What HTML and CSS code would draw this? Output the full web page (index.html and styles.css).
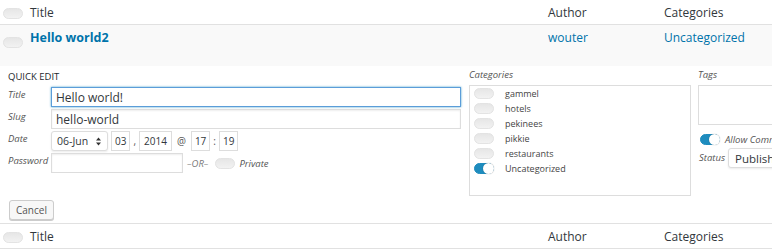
FILE: index.html
```
<!DOCTYPE html>
<html lang="en">
<head>
  <meta charset="UTF-8" />
  <title>Posts - Quick Edit</title>
  <link rel="stylesheet" href="styles.css">
</head>
<body>
  <table class="posts">
    <thead>
      <tr>
        <th class="check"><span class="toggle"></span></th>
        <th class="col-title">Title</th>
        <th class="col-author">Author</th>
        <th class="col-cats">Categories</th>
      </tr>
    </thead>
    <tbody>
      <tr class="post-row">
        <td class="check"><span class="toggle"></span></td>
        <td class="col-title"><a class="row-title">Hello world2</a></td>
        <td class="col-author"><a>wouter</a></td>
        <td class="col-cats"><a>Uncategorized</a></td>
      </tr>
      <tr class="edit-row">
        <td colspan="4">
          <div class="quick-edit">
            <!-- left column -->
            <fieldset class="qe-left">
              <h4>Quick Edit</h4>
              <label class="field">
                <span class="lbl">Title</span>
                <input type="text" class="wide focused" value="Hello world!" />
              </label>
              <label class="field">
                <span class="lbl">Slug</span>
                <input type="text" class="wide" value="hello-world" />
              </label>
              <div class="field">
                <span class="lbl">Date</span>
                <div class="date">
                  <span class="select month">06-Jun
                    <svg width="5" height="9" viewBox="0 0 5 9"><path d="M2.5 0.5 L5 3.5 H0 Z M2.5 8.5 L5 5.5 H0 Z" fill="#333"/></svg>
                  </span>
                  <span class="num">03</span><span class="sep">,</span>
                  <span class="num year">2014</span><span class="sep at">@</span>
                  <span class="num">17</span><span class="sep">:</span>
                  <span class="num">19</span>
                </div>
              </div>
              <div class="field">
                <span class="lbl">Password</span>
                <input type="text" class="pass" />
                <em class="or">&ndash;OR&ndash;</em>
                <span class="toggle"></span>
                <em class="private">Private</em>
              </div>
              <button class="cancel" type="button">Cancel</button>
            </fieldset>

            <!-- categories -->
            <fieldset class="qe-mid">
              <span class="title">Categories</span>
              <ul class="cat-list">
                <li><span class="toggle"></span>gammel</li>
                <li><span class="toggle"></span>hotels</li>
                <li><span class="toggle"></span>pekinees</li>
                <li><span class="toggle"></span>pikkie</li>
                <li><span class="toggle"></span>restaurants</li>
                <li><span class="toggle on"></span>Uncategorized</li>
              </ul>
            </fieldset>

            <!-- tags / status -->
            <fieldset class="qe-right">
              <span class="title">Tags</span>
              <div class="tags-box"></div>
              <div class="comments"><span class="toggle on"></span><em>Allow Comments</em></div>
              <div class="status">
                <span class="title">Status</span>
                <span class="select status-sel">Published</span>
              </div>
            </fieldset>
          </div>
        </td>
      </tr>
    </tbody>
    <tfoot>
      <tr>
        <th class="check"><span class="toggle"></span></th>
        <th class="col-title">Title</th>
        <th class="col-author">Author</th>
        <th class="col-cats">Categories</th>
      </tr>
    </tfoot>
  </table>
</body>
</html>
```
FILE: styles.css
```
body {
  margin: 0;
  width: 772px;
  overflow: hidden;
  background: #fff;
  font-family: 'Open Sans', sans-serif;
  color: #444;
}
.posts {
  width: 820px;
  border-collapse: collapse;
  table-layout: fixed;
}
.posts th {
  font-weight: 400;
  text-align: left;
  font-size: 12px;
  color: #32373c;
  height: 24px;
  padding: 0;
}
thead tr {
  border-bottom: 1px solid #e1e1e1;
}
tfoot tr {
  border-top: 1px solid #e1e1e1;
  border-bottom: 1px solid #e1e1e1;
}
.check {
  width: 27px;
  padding: 0 0 0 3px !important;
}
.col-title { width: 518px; }
.col-author { width: 116px; }
.col-cats { width: auto; }
.post-row {
  background: #f9f9f9;
}
.post-row td {
  height: 37px;
  vertical-align: top;
  padding: 4px 0 0;
  font-size: 12px;
  line-height: 18px;
}
.post-row .check {
  padding-top: 8px !important;
  height: 33px;
}
.post-row a {
  color: #0073aa;
}
.row-title {
  font-weight: 700;
  font-size: 12.5px;
}

/* toggles */
.toggle {
  display: inline-block;
  vertical-align: middle;
  width: 18px;
  height: 9px;
  border-radius: 6px;
  background: linear-gradient(#e6e6e6, #f2f2f2);
  border: 1px solid #e3e3e3;
  position: relative;
}
.toggle.on {
  background: #1e8cbe;
  border-color: #1e8cbe;
}
.toggle.on::after {
  content: '';
  position: absolute;
  right: -1px;
  top: -1px;
  width: 11px;
  height: 11px;
  border-radius: 50%;
  background: #fff;
  box-shadow: 0 0 1px rgba(0,0,0,0.4);
}

/* quick edit */
.edit-row td {
  padding: 0;
}
.quick-edit {
  display: flex;
  height: 157px;
  font-size: 10px;
}
fieldset {
  border: 0;
  margin: 0;
  padding: 0;
}
.qe-left {
  width: 454px;
  padding: 5px 0 0 8px;
}
.qe-left h4 {
  margin: 0 0 4px;
  font-size: 9.5px;
  font-weight: 400;
  text-transform: uppercase;
  color: #23282d;
  line-height: 12px;
}
.field {
  display: flex;
  align-items: center;
  height: 20px;
  margin-bottom: 2px;
}
.lbl {
  width: 43px;
  flex: none;
  font-style: italic;
  font-size: 9.5px;
  color: #555;
  align-self: flex-start;
  padding-top: 1px;
}
input {
  font-family: 'Open Sans', sans-serif;
  box-sizing: border-box;
  height: 20px;
  border: 1px solid #ddd;
  box-shadow: inset 0 1px 2px rgba(0,0,0,0.07);
  padding: 0 4px;
  font-size: 12px;
  color: #32373c;
  margin: 0;
}
input.wide { width: 410px; }
input.focused {
  border-color: #5b9dd9;
  box-shadow: 0 0 2px rgba(30,140,190,0.8);
}
input.pass { width: 132px; }
.date {
  display: flex;
  align-items: center;
  font-size: 10px;
  color: #32373c;
}
.select {
  box-sizing: border-box;
  display: inline-flex;
  align-items: center;
  justify-content: space-between;
  height: 20px;
  border: 1px solid #ddd;
  border-radius: 3px;
  box-shadow: 0 1px 2px rgba(0,0,0,0.08);
  background: #fff;
  font-size: 12px;
  color: #32373c;
}
.month {
  width: 57px;
  padding: 0 6px 0 5px;
  font-size: 10.5px;
}
.num {
  box-sizing: border-box;
  height: 20px;
  line-height: 18px;
  border: 1px solid #ddd;
  padding: 0 3px;
  margin-left: 3px;
  font-size: 10px;
}
.year { padding: 0 4px; }
.sep {
  margin-left: 3px;
  color: #555;
}
.at { margin: 0 2px 0 5px; }
.or {
  margin: 0 7px 0 4px;
  color: #777;
  font-size: 9.5px;
}
.private {
  margin-left: 4px;
  color: #555;
  font-size: 9.5px;
}
.cancel {
  margin: 25px 0 0 1px;
  height: 20px;
  padding: 0 6px;
  font-family: 'Open Sans', sans-serif;
  font-size: 10px;
  color: #555;
  background: #f7f7f7;
  border: 1px solid #ccc;
  border-radius: 3px;
  box-shadow: 0 1px 0 #ccc;
}
.title {
  display: block;
  font-style: italic;
  font-size: 9.5px;
  color: #555;
  line-height: 14px;
}
.qe-mid {
  width: 222px;
  margin-left: 7px;
  padding-top: 2px;
}
.cat-list {
  list-style: none;
  margin: 3px 0 0;
  padding: 0 0 0 4px;
  height: 109px;
  border: 1px solid #ddd;
}
.cat-list li {
  height: 15px;
  display: flex;
  align-items: center;
  font-size: 9px;
  color: #444;
}
.cat-list .toggle {
  margin-right: 11px;
}
.qe-right {
  margin-left: 7px;
  padding-top: 2px;
  width: 120px;
}
.tags-box {
  margin-top: 3px;
  height: 38px;
  width: 110px;
  border: 1px solid #ddd;
}
.comments {
  display: flex;
  align-items: center;
  margin: 8px 0 0 2px;
  font-size: 9.5px;
  color: #555;
  white-space: nowrap;
}
.comments .toggle { margin-right: 5px; }
.status {
  display: flex;
  align-items: center;
  margin-top: 2px;
}
.status .title { margin: 0 3px 0 1px; }
.status-sel {
  padding: 0 6px;
  height: 20px;
  font-size: 11.5px;
  white-space: nowrap;
}
```
